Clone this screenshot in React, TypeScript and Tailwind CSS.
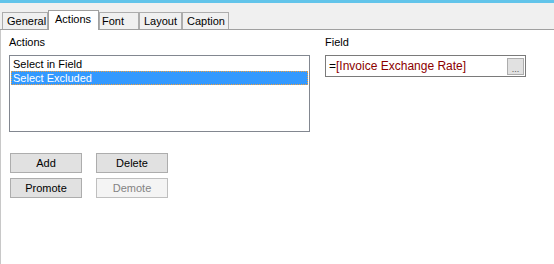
import React from "react";

const tabs = [
  { t: "General", w: "w-[46px] pl-[4px]" },
  { t: "Actions", w: "w-[51px] pl-[6px]" },
  { t: "Font", w: "w-[40px] pl-[2px]" },
  { t: "Layout", w: "w-[43px] pl-[4px]" },
  { t: "Caption", w: "w-[47px] pl-[4px]" },
];

function Btn({ label, disabled }: { label: string; disabled?: boolean }) {
  return (
    <div
      className={
        disabled
          ? "w-[72px] h-[20px] flex items-center justify-center border border-[#bfbfbf] bg-[#f4f4f4] text-[#838383]"
          : "w-[72px] h-[20px] flex items-center justify-center border border-[#adadad] bg-[#e1e1e1] text-black"
      }
    >
      {label}
    </div>
  );
}

export default function App() {
  return (
    <div
      className="w-[554px] h-[264px] bg-white overflow-hidden flex flex-col text-[11px] leading-[13px] text-black"
      style={{ fontFamily: '"Liberation Sans", Arial, sans-serif' }}
    >
      <div className="h-[3px] bg-[#62c4ea] shrink-0" />
      <div className="h-[27px] shrink-0 bg-[#f0f0f0] border-b border-[#a0a0a0] flex items-end pl-[2px]">
        {tabs.map(({ t, w }) =>
          t === "Actions" ? (
            <div
              key={t}
              className={`relative z-10 -mb-px h-[20px] ${w} bg-white border border-b-0 border-[#a0a0a0] flex items-start pt-[2px]`}
            >
              {t}
            </div>
          ) : (
            <div
              key={t}
              className={`h-[17px] ${w} bg-[#f0f0f0] border border-b-0 border-[#adadad] flex items-start pt-[2px]`}
            >
              {t}
            </div>
          )
        )}
      </div>
      <div className="flex-1 border-l border-[#c8c8c8] flex pl-[8px] pt-[6px]">
        <div className="w-[301px] flex flex-col">
          <div className="h-[13px] mb-[6px]">Actions</div>
          <div className="h-[77px] border border-[#828790] p-[1px] flex flex-col">
            <div className="h-[14px] pl-[2px] pt-[1px]">Select in Field</div>
            <div className="h-[14px] pl-[2px] pt-[1px] bg-[#3399ff] text-white outline outline-1 outline-dotted outline-[#f0a040] -outline-offset-1">
              Select Excluded
            </div>
          </div>
          <div className="mt-[21px] flex flex-col gap-[5px] pl-[1px]">
            <div className="flex gap-[14px]">
              <Btn label="Add" />
              <Btn label="Delete" />
            </div>
            <div className="flex gap-[14px]">
              <Btn label="Promote" />
              <Btn label="Demote" disabled />
            </div>
          </div>
        </div>
        <div className="ml-[15px] w-[201px] flex flex-col">
          <div className="h-[13px] mb-[6px]">Field</div>
          <div className="h-[22px] border border-[#7a7a7a] flex items-center justify-between pl-[3px] pr-[1px]">
            <span className="text-[12px]">
              =<span className="text-[#8b0000]">[Invoice Exchange Rate]</span>
            </span>
            <div className="w-[17px] h-[17px] border border-[#adadad] bg-[#e1e1e1] flex items-end justify-center text-[9px] leading-[10px] text-[#555]">
              ...
            </div>
          </div>
        </div>
      </div>
    </div>
  );
}
